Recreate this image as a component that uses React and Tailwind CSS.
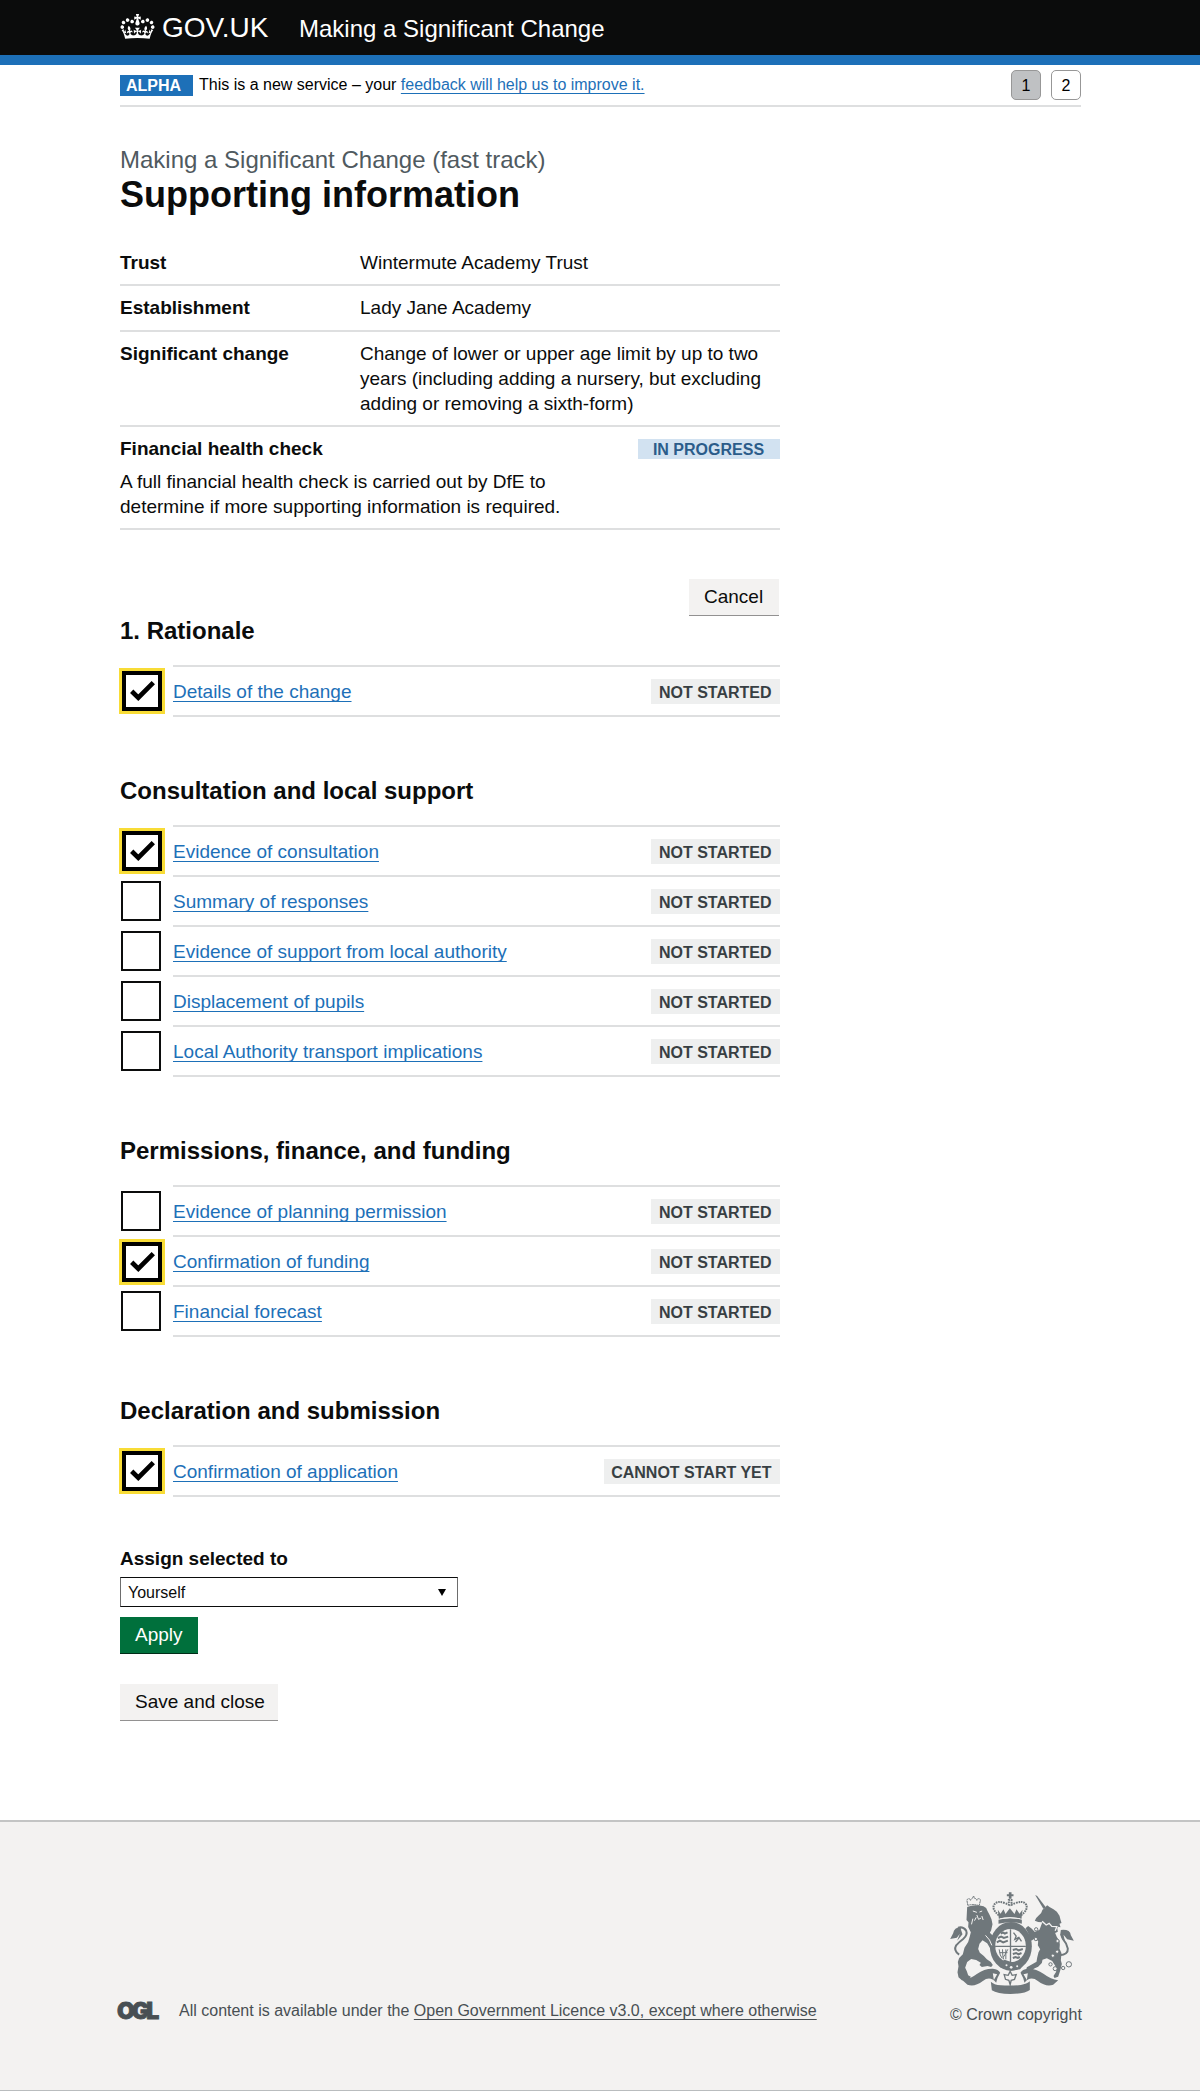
const CROWN =
  "M25 30.2c3.5 1.5 7.7-.2 9.1-3.7 1.5-3.6-.2-7.8-3.9-9.2-3.6-1.4-7.6.3-9.1 3.9-1.4 3.5.3 7.5 3.9 9zM9 39.5c3.6 1.5 7.8-.2 9.2-3.7 1.5-3.6-.2-7.8-3.9-9.1-3.6-1.5-7.6.2-9.1 3.8-1.4 3.5.3 7.5 3.8 9zM4.4 57.2c3.5 1.5 7.7-.2 9.1-3.8 1.5-3.6-.2-7.7-3.9-9.1-3.5-1.5-7.6.3-9.1 3.8-1.4 3.5.3 7.6 3.9 9.1zm38.3-21.4c3.5 1.5 7.7-.2 9.1-3.8 1.5-3.6-.2-7.7-3.9-9.1-3.6-1.5-7.6.3-9.1 3.8-1.3 3.6.4 7.7 3.9 9.1zm64.4-5.6c-3.6 1.5-7.8-.2-9.1-3.7-1.5-3.6.2-7.8 3.8-9.2 3.6-1.4 7.7.3 9.2 3.9 1.3 3.5-.4 7.5-3.9 9zm15.9 9.3c-3.6 1.5-7.7-.2-9.1-3.7-1.5-3.6.2-7.8 3.7-9.1 3.6-1.5 7.7.2 9.2 3.8 1.5 3.5-.3 7.5-3.8 9zm4.7 17.7c-3.6 1.5-7.8-.2-9.2-3.8-1.5-3.6.2-7.7 3.9-9.1 3.6-1.5 7.7.3 9.2 3.8 1.3 3.5-.4 7.6-3.9 9.1zM89.3 35.8c-3.6 1.5-7.8-.2-9.2-3.8-1.4-3.6.2-7.7 3.9-9.1 3.6-1.5 7.7.3 9.2 3.8 1.4 3.6-.3 7.7-3.9 9.1zM69.7 17.7l8.9 4.7V9.3l-8.9 2.8c-.2-.3-.5-.6-.9-.9L72.4 0H59.6l3.5 11.2c-.3.3-.6.5-.9.9l-8.8-2.8v13.1l8.8-4.7c.3.3.6.7.9.9l-5 15.4v.1c-.2.8-.4 1.6-.4 2.4 0 4.1 3.1 7.5 7 8.1h.2c.3 0 .7.1 1 .1.4 0 .7 0 1-.1h.2c4-.6 7.1-4.1 7.1-8.1 0-.8-.1-1.7-.4-2.4V34l-5.1-15.4c.4-.2.7-.6 1-.9zM66 92.8c16.9 0 32.8 1.1 47.1 3.2 4-16.9 8.9-26.7 14-33.5l-9.6-3.4c1 4.9 1.1 7.2 0 10.2-1.5-1.4-3-4.3-4.2-8.7L108.6 76c2.8-2 5-3.2 7.5-3.3-4.4 9.4-10 11.9-13.6 11.2-4.3-.8-6.3-4.6-5.6-7.9 1-4.7 5.7-5.9 8-.5 4.3-8.7-3-11.4-7.6-8.8 7.1-7.2 7.9-13.5 2.1-21.1-8 6.1-8.1 12.3-4.5 20.8-4.7-5.4-12.1-2.5-9.5 6.2 3.4-5.2 7.9-2 7.2 3.1-.6 4.3-6.4 7.8-13.5 7.2-10.3-.9-10.9-8-11.2-13.8 2.5-.5 7.1 1.8 11 7.3L80.2 60c-4.1 4.4-8 5.3-12.3 5.4 1.4-4.4 8-11.6 8-11.6H55.5s6.4 7.2 7.9 11.6c-4.2-.1-8-1-12.3-5.4l1.4 16.4c3.9-5.5 8.5-7.7 10.9-7.3-.3 5.8-.9 12.8-11.1 13.8-7.2.6-12.9-2.9-13.5-7.2-.7-5 3.8-8.3 7.1-3.1 2.7-8.7-4.6-11.6-9.4-6.2 3.7-8.5 3.6-14.7-4.6-20.8-5.8 7.6-5 13.9 2.2 21.1-4.7-2.6-11.9.1-7.7 8.8 2.3-5.5 7.1-4.2 8.1.5.7 3.3-1.3 7.1-5.7 7.9-3.5.7-9-1.8-13.5-11.2 2.5.1 4.7 1.3 7.5 3.3l-4.7-15.4c-1.2 4.4-2.7 7.2-4.3 8.7-1.1-3-.9-5.3 0-10.2l-9.5 3.4c5 6.9 9.9 16.7 14 33.5 14.8-2.1 30.8-3.2 47.7-3.2z";

const summary = [
  { label: "Trust", value: "Wintermute Academy Trust", pad: "pb-[9px]" },
  { label: "Establishment", value: "Lady Jane Academy", pad: "pt-[9px] pb-2.5" },
  {
    label: "Significant change",
    value:
      "Change of lower or upper age limit by up to two years (including adding a nursery, but excluding adding or removing a sixth-form)",
    pad: "py-[9px]",
  },
];

const sections = [
  { title: "1. Rationale", tasks: [{ name: "Details of the change", checked: true }] },
  {
    title: "Consultation and local support",
    tasks: [
      { name: "Evidence of consultation", checked: true },
      { name: "Summary of responses" },
      { name: "Evidence of support from local authority" },
      { name: "Displacement of pupils" },
      { name: "Local Authority transport implications" },
    ],
  },
  {
    title: "Permissions, finance, and funding",
    tasks: [
      { name: "Evidence of planning permission" },
      { name: "Confirmation of funding", checked: true },
      { name: "Financial forecast" },
    ],
  },
  {
    title: "Declaration and submission",
    tasks: [{ name: "Confirmation of application", checked: true, status: "CANNOT START YET" }],
  },
];

function Link({ children }) {
  return (
    <a
      href="#"
      className="text-[#1d70b8] underline decoration-1 underline-offset-[3px] [text-decoration-skip-ink:none]"
    >
      {children}
    </a>
  );
}

function Checkbox({ checked, first }) {
  if (!checked) {
    return <span className="mt-1.5 ml-px block size-10 border-2 border-[#0b0c0c] bg-white" />;
  }
  return (
    <span
      className={`${first ? "mt-[3px]" : "mt-1"} -ml-px block size-[46px] border-3 border-[#f8dc36] bg-white`}
    >
      <svg viewBox="0 0 40 40" className="block size-10">
        <path d="M2 2h36v36H2z" fill="none" stroke="#000" strokeWidth="4" />
        <path d="M9.7 20.3l6.6 6.4 15-15" fill="none" stroke="#000" strokeWidth="4.7" />
      </svg>
    </span>
  );
}

function TaskRow({ task, first }) {
  return (
    <li className="flex h-[50px] items-start">
      <div className="w-[53px] shrink-0">
        <Checkbox checked={task.checked} first={first} />
      </div>
      <div
        className={`${first ? "border-t-2" : "pt-0.5"} flex h-[52px] flex-1 items-start justify-between border-b-2 border-[#dedfe0]`}
      >
        <span className="mt-3 leading-[25px]">
          <Link>{task.name}</Link>
        </span>
        <strong className="mt-3 h-[25px] bg-[#eeefef] pt-px pr-[8.5px] pl-[7.5px] text-base leading-[25px] font-bold text-[#383f43]">
          {task.status || "NOT STARTED"}
        </strong>
      </div>
    </li>
  );
}

function Section({ section, index }) {
  return (
    <section className={index === 0 ? "" : "mt-[59px]"}>
      <h2 className="text-2xl leading-[30px] font-bold">{section.title}</h2>
      <ul className="mt-[19px] pb-0.5">
        {section.tasks.map((task, i) => (
          <TaskRow key={task.name} task={task} first={i === 0} />
        ))}
      </ul>
    </section>
  );
}

function Button({ children, className }) {
  return (
    <button
      type="button"
      className={`${className} block h-[37px] border-b pb-px pl-[15px] text-left text-[19px] leading-[25px] whitespace-nowrap`}
    >
      {children}
    </button>
  );
}

function Arms() {
  return (
    <svg viewBox="90 66 371 306" className="h-[102px] w-[124px]" fill="#6f777b">
      {/* centre crown */}
      <g>
        <path d="M266 67h8v6h6v6h-6v7h-8v-7h-6v-6h6z" />
        <path d="M236 136q-22-18-14-32 10-14 34-4l10 4V90h8v14l10-4q26-10 34 4 7 14-15 32" fill="none" stroke="#6f777b" strokeWidth="6" strokeDasharray="5 2.5" />
        <path d="M233 119l8 12 9-13 6 14 13-17 14 17 6-14 9 13 9-12-3 27q-34-8-68 0z" />
        <path d="M235 149q35-9 70 0v12q-35-9-70 0z" />
        <path d="M240 146q29-6 60 0" fill="none" stroke="#f3f2f1" strokeWidth="3" />
      </g>
      {/* garter and shield */}
      <ellipse cx="272" cy="229" rx="63" ry="73" />
      <ellipse cx="271" cy="227" rx="46" ry="50" fill="#f3f2f1" />
      <path d="M269 178h4v98h-4zM225 227h92v4h-92z" />
      <g fill="none" stroke="#6f777b" strokeWidth="6">
        <path d="M242 191l6-4 6 4 8-4M233 204l10-4 8 4 13-4M230 217l9-5 10 5 14-5" />
        <path d="M278 240l10-3 7 4 13-4M278 252l10-3 7 4 9-4M278 264l8-3 7 3 6-3" />
        <path d="M280 188l8 10-4 10 12-6 8 12M286 216l12-14" strokeWidth="4" />
        <path d="M237 238q2 20 9 27M247 238q0 20 3 30M257 238v30M263 238q-10 20-14 24M238 248h24" strokeWidth="3" />
      </g>
      <path d="M239 279l14-10 39 13 24-6-16 22-28 4-32-10z" />
      <g fill="#f3f2f1">
        <circle cx="259" cy="286" r="3" />
        <circle cx="273" cy="292" r="4" />
        <circle cx="291" cy="289" r="3" />
      </g>
      {/* lion */}
      <path d="M143 106l-3-16q4-6 9-3l2 4q2-6 7-7v-4h4v4q6 1 8 7l2-4q6-3 9 3l-4 17q-17-6-34-1z" fill="none" stroke="#6f777b" strokeWidth="3" strokeDasharray="6 1.5" />
      <path d="M141 111q22-9 49-2l8 5 4 9 6 11 6 14 3 15-4 18-4 7 10 10 6 14-4 8 5 8-2 12-9 3-6-10-8-13-14-9-9 10-4 16 5 11 12 10 9 10 12 8 6 9-5 6-11-3-17 3-7-6 4-7-14-8-15-3-12 9-6 17 5 11 4 12 8 4-6 12-12 1-9-2-10-9-3-15 3-18-2-13 4-12 11-11 5-20 11-17 5-17 3-12-8-16 1-14-6-7z" />
      <g stroke="#f3f2f1" fill="none" strokeWidth="3">
        <path d="M158 123l12 4M178 126l8-3M170 135l5 13 8-4M158 146l-4 17M196 196l12 14 7 16" />
        <path d="M168 142l-5 10M185 138l4 12" />
      </g>
      <path d="M117 254q-18-12-9-28 10-11 21-19 14-12 9-25-9-13-24-9" fill="none" stroke="#6f777b" strokeWidth="6" />
      <path d="M123 171q-22 1-24 19l-9 17 20-4 9-12-8 21 16-19-5-15z" />
      {/* unicorn */}
      <path d="M345 75l6 3 26 34-7 5z" />
      <path d="M371 116l10-10 7 5 12 7 10 7 8 12 3 12 3 10-6 2 3 11-7-2-6 10-25-12-18-11-11-1-10-4 4-8 15-15 4-10z" />
      <path d="M366 158l20 7 25 8 2 12-8 4 5 12 8 12 1 11-1 12 6 14-2 21 3 11-5 20-6 18-11 4-3-6 8-13-2-16-10-16-16-8-13 4-2 10-11 11-10 5-13 7-13-3 2-7 16-9 13-8 2-12 4-16 5-9-7-12 1-12-9-10-11 8-8-6-2-17-8-14 8-7 11 8 9 10 14-7z" />
      <path d="M366 154l12 11 9-5 8 9 15 1-5 12" fill="none" stroke="#f3f2f1" strokeWidth="4" />
      <path d="M418 256q26-2 25-20-3-16-14-28-11-16 3-25" fill="none" stroke="#6f777b" strokeWidth="6" />
      <path d="M422 180q28-3 30 16l9 16-20-4-11-14 4 18-14-17z" />
      <g fill="#f3f2f1" stroke="#6f777b" strokeWidth="3">
        <circle cx="348" cy="178" r="5" />
        <circle cx="347" cy="207" r="5" />
        <circle cx="412" cy="213" r="5" />
        <circle cx="411" cy="245" r="5" />
        <circle cx="398" cy="257" r="5" />
        <circle cx="391" cy="283" r="5" />
        <circle cx="405" cy="296" r="6" />
        <circle cx="429" cy="294" r="5" />
        <circle cx="446" cy="283" r="8" />
      </g>
      {/* ribbon and flower */}
      <path d="M127 331q22-3 43-19 24-17 48-16 17 1 22 12l-8 16-4 14q-18-22-40-5-25 19-46 11z" />
      <path d="M414 331q-22-3-43-19-24-17-48-16-17 1-22 12l8 16 4 14q18-22 40-5 25 19 46 11z" />
      <path d="M212 335q9 9 30 11 30 2 60-1 18-3 27-11v26q-14 11-58 12-40 0-56-11z" />
      <path d="M218 310l13 3-10 17zM323 310l-13 3 10 17z" fill="#f3f2f1" />
      <path d="M270 304l6 12 12-2-5 14-10 3-3 13-4-13-10-3-4-14 12 2z" fill="#f3f2f1" stroke="#6f777b" strokeWidth="4" />
    </svg>
  );
}

export default function App() {
  return (
    <div className="flex min-h-[2091px] w-full flex-col bg-white font-['Liberation_Sans',Arial,sans-serif] text-[19px] text-[#0b0c0c]">
      <header className="h-[65px] border-b-10 border-[#1d70b8] bg-[#0b0c0c] text-white">
        <div className="flex items-start pl-[120px]">
          <svg viewBox="0 0 132 97" className="mt-3.5 h-[25px] w-[35px]" fill="currentColor">
            <path d={CROWN} />
          </svg>
          <span className="mt-[13px] ml-[7px] w-[137px] text-[28px] leading-[30px]">GOV.UK</span>
          <span className="mt-3.5 text-2xl leading-[30px]">Making a Significant Change</span>
        </div>
      </header>

      <div className="ml-[120px] flex h-[42px] w-[961px] items-start border-b-2 border-[#dedfe0] text-base text-black">
        <strong className="mt-2.5 h-[21px] w-[73px] bg-[#1d70b8] pl-1.5 leading-[21px] font-bold text-white">
          ALPHA
        </strong>
        <p className="mt-2.5 ml-1.5 leading-5">
          This is a new service – your <Link>feedback will help us to improve it.</Link>
        </p>
        <nav className="mt-[5px] ml-auto flex gap-2.5 text-center leading-[29px]">
          <a className="size-[30px] rounded-[5px] border border-[#979797] bg-[#bfc1c3]">1</a>
          <a className="size-[30px] rounded-[5px] border border-[#979797]">2</a>
        </nav>
      </div>

      <main className="mt-[38px] ml-[120px] w-[660px]">
        <p className="text-2xl leading-[30px] text-[#505a5f]">Making a Significant Change (fast track)</p>
        <h1 className="text-4xl leading-10 font-bold">Supporting information</h1>

        <dl className="mt-[35px] leading-[25px]">
          {summary.map((row) => (
            <div key={row.label} className={`${row.pad} flex border-b-2 border-[#dedfe0]`}>
              <dt className="w-60 shrink-0 font-bold">{row.label}</dt>
              <dd className="w-[410px]">{row.value}</dd>
            </div>
          ))}
          <div className="border-b-2 border-[#dedfe0] py-[9px]">
            <div className="flex items-start justify-between">
              <dt className="font-bold">Financial health check</dt>
              <dd className="mt-[3px] h-5 w-[142px] bg-[#d2e2f1] pt-px pr-px text-center text-base leading-5 font-bold text-[#2b5c8a]">
                IN PROGRESS
              </dd>
            </div>
            <dd className="mt-2 w-[450px]">
              A full financial health check is carried out by DfE to determine if more supporting
              information is required.
            </dd>
          </div>
        </dl>

        <div className="mt-[49px] mr-px flex justify-end">
          <Button className="w-[90px] border-[#929191] bg-[#f3f2f1]">Cancel</Button>
        </div>

        {sections.map((section, i) => (
          <Section key={section.title} section={section} index={i} />
        ))}

        <div className="mt-[49px] flex flex-col items-start">
          <label className="leading-[25px] font-bold">Assign selected to</label>
          <div className="mt-1.5 flex h-[30px] w-[338px] items-center justify-between border border-[#0b0c0c] border-x-[#6d6d6d] pr-[11px] pl-[7px] text-base leading-5">
            <span className="pt-0.5">Yourself</span>
            <svg viewBox="0 0 8 7" className="h-[7px] w-2">
              <path d="M0 0h8L4 7z" />
            </svg>
          </div>
          <div className="mt-2.5">
            <Button className="w-[78px] border-[#002d18] bg-[#00703c] text-white">Apply</Button>
          </div>
          <div className="mt-[30px]">
            <Button className="w-[158px] border-[#929191] bg-[#f3f2f1]">Save and close</Button>
          </div>
        </div>
      </main>

      <footer className="mt-[99px] flex h-[271px] items-start border-t-2 border-b border-t-[#c3c4c4] border-b-[#b9bcbe] bg-[#f3f2f1] pl-[116px] text-base leading-5 text-[#484f53]">
        <strong className="mt-[178px] w-[63px] pl-px font-['Inter',sans-serif] text-[23px] leading-[22px] font-black tracking-[-3px] text-[#484f53] [-webkit-text-stroke:0.8px_#484f53]">
          OGL
        </strong>
        <p className="mt-[179px]">
          All content is available under the{" "}
          <a
            href="#"
            className="underline decoration-1 underline-offset-[3px] [text-decoration-skip-ink:none]"
          >
            Open Government Licence v3.0, except where otherwise
          </a>
        </p>
        <div className="mt-[70px] mr-[117px] ml-auto flex w-[133px] flex-col">
          <Arms />
          <span className="mt-[11px] whitespace-nowrap">© Crown copyright</span>
        </div>
      </footer>
    </div>
  );
}
